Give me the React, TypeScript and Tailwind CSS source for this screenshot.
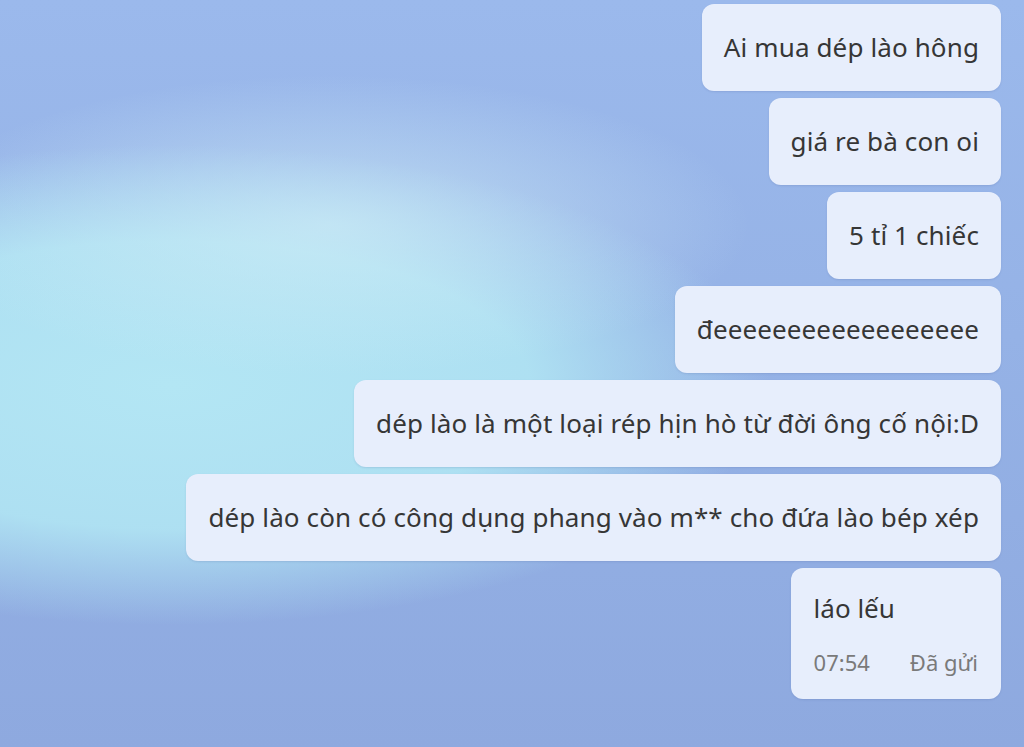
import React from 'react';

const messages = [
  'Ai mua dép lào hông',
  'giá re bà con oi',
  '5 tỉ 1 chiếc',
  'đeeeeeeeeeeeeeeeeee',
  'dép lào là một loại rép hịn hò từ đời ông cố nội:D',
  'dép lào còn có công dụng phang vào m** cho đứa lào bép xép',
];

export default function App() {
  return (
    <div
      className="w-[1024px] h-[747px] overflow-hidden bg-[radial-gradient(ellipse_420px_150px_at_330px_225px,rgba(205,236,246,0.7),rgba(205,236,246,0)_100%),radial-gradient(ellipse_600px_240px_at_170px_385px,#b3e6f4_0%,rgba(176,228,243,0.92)_60%,rgba(176,228,243,0)_100%),linear-gradient(180deg,#9bb9ec_0%,#95b2e6_45%,#8ea9df_100%)]"
      style={{ fontFamily: '"Noto Sans", "Open Sans", sans-serif' }}
    >
      <div className="flex flex-col items-end gap-[7px] pt-[4px] pr-[23px]">
        {messages.map((m) => (
          <div
            key={m}
            className="h-[87px] flex items-center px-[22px] rounded-[12px] bg-[#e7eefc] shadow-[0_1px_2px_rgba(60,80,140,0.15)] text-[26px] tracking-[0.12px] text-[#363636] whitespace-nowrap"
          >
            {m}
          </div>
        ))}
        <div className="h-[131px] flex flex-col px-[23px] pt-[22px] rounded-[12px] bg-[#e7eefc] shadow-[0_1px_2px_rgba(60,80,140,0.15)]">
          <div className="text-[26px] leading-[36px] text-[#363636]">láo lếu</div>
          <div className="flex gap-[40px] mt-[21px] text-[22px] leading-[30px] text-[#7a7a7a] whitespace-nowrap">
            <span>07:54</span>
            <span>Đã gửi</span>
          </div>
        </div>
      </div>
    </div>
  );
}
